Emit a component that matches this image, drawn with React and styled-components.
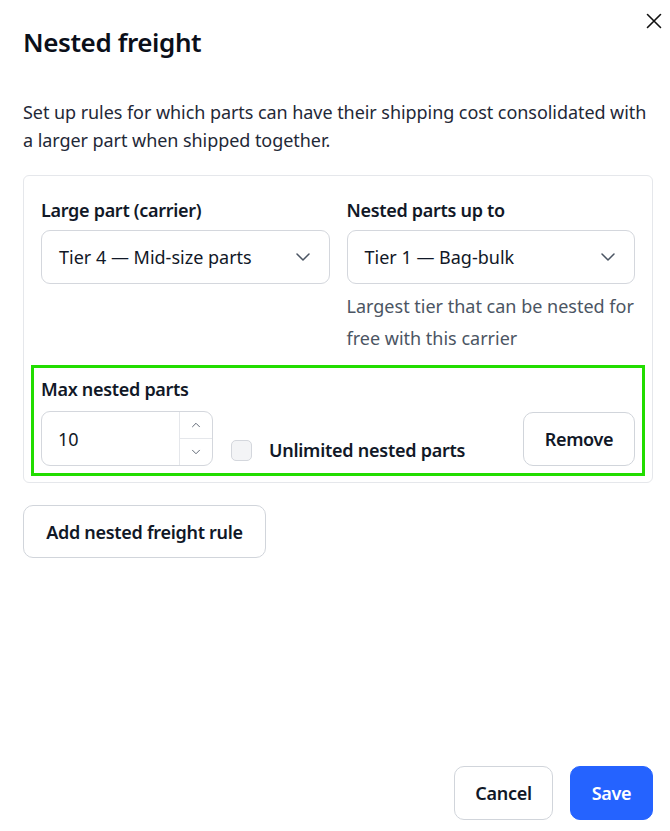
import React from "react";
import styled, { createGlobalStyle } from "styled-components";

const Global = createGlobalStyle`
  html, body { margin: 0; padding: 0; background: #ffffff; }
  body { font-family: "Noto Sans", "Liberation Sans", sans-serif; color: #111827; }
  * { box-sizing: border-box; }
`;

const Dialog = styled.div`
  position: relative;
  height: 831px;
  width: 670px;
  display: flex;
  flex-direction: column;
  padding: 24px 17px 11px 23px;
`;

const Close = styled.button`
  position: absolute;
  top: 9px;
  right: 4px;
  width: 24px;
  height: 24px;
  padding: 0;
  border: none;
  background: transparent;
  display: flex;
  align-items: center;
  justify-content: center;
  color: #111111;
`;

const Title = styled.h2`
  margin: 0;
  font-size: 26px;
  line-height: 36px;
  font-weight: 600;
  letter-spacing: -0.4px;
  color: #0b0f19;
`;

const Description = styled.p`
  margin: 38px 0 21px;
  font-size: 18px;
  line-height: 28px;
  letter-spacing: -0.06px;
  color: #1f2937;
`;

const Card = styled.div`
  border: 1px solid #e5e7eb;
  border-radius: 6px;
  padding: 20px 17px 16px;
  display: flex;
  flex-direction: column;
  gap: 21px;
`;

const Grid = styled.div`
  display: grid;
  grid-template-columns: 1fr 1fr;
  column-gap: 17px;
`;

const Field = styled.div`
  display: flex;
  flex-direction: column;
`;

const Label = styled.label`
  font-size: 18px;
  line-height: 28px;
  font-weight: 600;
  letter-spacing: -0.3px;
  color: #111827;
  margin-bottom: ${(p) => p.$gap || 6}px;
`;

const Select = styled.div`
  height: 54px;
  border: 1px solid #d4d7dd;
  border-radius: 9px;
  display: flex;
  align-items: center;
  justify-content: space-between;
  padding: 0 14px 0 17px;
  font-size: 18px;
  color: #111827;
  background: #fff;
`;

const SelectIcon = styled.span`
  display: flex;
  color: #4b5563;
`;

const Help = styled.div`
  margin-top: 6px;
  font-size: 18px;
  line-height: 32px;
  color: #4b5563;
`;

const MaxRow = styled.div`
  outline: 3px solid #22dd00;
  outline-offset: 7px;
  display: flex;
  flex-direction: column;
`;

const Controls = styled.div`
  display: flex;
  align-items: flex-end;
`;

const NumberBox = styled.div`
  width: 172px;
  height: 55px;
  border: 1px solid #d4d7dd;
  border-radius: 9px;
  display: flex;
  overflow: hidden;
`;

const NumberValue = styled.div`
  flex: 1;
  display: flex;
  align-items: center;
  padding-left: 16px;
  font-size: 18px;
  color: #111827;
`;

const Spinner = styled.div`
  width: 33px;
  border-left: 1px solid #e5e7eb;
  display: flex;
  flex-direction: column;
`;

const SpinBtn = styled.div`
  flex: 1;
  display: flex;
  align-items: center;
  justify-content: center;
  color: #4b5563;
  & + & { border-top: 1px solid #e5e7eb; }
`;

const CheckGroup = styled.label`
  display: flex;
  align-items: center;
  gap: 17px;
  margin-left: 18px;
  padding-bottom: 2px;
  font-size: 18px;
  line-height: 28px;
  font-weight: 600;
  letter-spacing: -0.25px;
  color: #111827;
`;

const Check = styled.span`
  width: 21px;
  height: 21px;
  border: 1px solid #d4d7dd;
  border-radius: 5px;
  background: #f3f4f6;
`;

const Button = styled.button`
  height: ${(p) => p.$h || 54}px;
  width: ${(p) => p.$w}px;
  padding: 0;
  white-space: nowrap;
  border-radius: 10px;
  font-family: inherit;
  font-size: 18px;
  font-weight: 600;
  letter-spacing: -0.3px;
  border: 1px solid ${(p) => (p.$primary ? "#2563ff" : "#d1d5db")};
  background: ${(p) => (p.$primary ? "#2563ff" : "#ffffff")};
  color: ${(p) => (p.$primary ? "#ffffff" : "#111827")};
`;

const RemoveButton = styled(Button)`
  margin-left: auto;
  align-self: flex-end;
`;

const AddRow = styled.div`
  margin-top: 22px;
  display: flex;
`;

const Footer = styled.div`
  margin-top: auto;
  display: flex;
  justify-content: flex-end;
  gap: 17px;
`;

const Chevron = ({ size = 18, up }) => (
  <svg width={size} height={size} viewBox="0 0 24 24" fill="none" stroke="currentColor" strokeWidth="1.5" strokeLinecap="round" strokeLinejoin="round">
    {up ? <path d="M6 15l6-6 6 6" /> : <path d="M6 9l6 6 6-6" />}
  </svg>
);

export default function App() {
  return (
    <>
      <Global />
      <Dialog>
        <Close aria-label="Close">
          <svg width="16" height="16" viewBox="0 0 16 16" fill="none" stroke="currentColor" strokeWidth="1.6" strokeLinecap="round">
            <path d="M1.5 1.5l13 13M14.5 1.5l-13 13" />
          </svg>
        </Close>
        <Title>Nested freight</Title>
        <Description>
          Set up rules for which parts can have their shipping cost consolidated with a larger part when shipped together.
        </Description>
        <Card>
          <Grid>
            <Field>
              <Label>Large part (carrier)</Label>
              <Select>
                <span>Tier 4 — Mid-size parts</span>
                <SelectIcon><Chevron size={24} /></SelectIcon>
              </Select>
            </Field>
            <Field>
              <Label>Nested parts up to</Label>
              <Select>
                <span>Tier 1 — Bag-bulk</span>
                <SelectIcon><Chevron size={24} /></SelectIcon>
              </Select>
              <Help>Largest tier that can be nested for free with this carrier</Help>
            </Field>
          </Grid>
          <MaxRow>
            <Label $gap={8}>Max nested parts</Label>
            <Controls>
              <NumberBox>
                <NumberValue>10</NumberValue>
                <Spinner>
                  <SpinBtn><Chevron size={14} up /></SpinBtn>
                  <SpinBtn><Chevron size={14} /></SpinBtn>
                </Spinner>
              </NumberBox>
              <CheckGroup>
                <Check />
                Unlimited nested parts
              </CheckGroup>
              <RemoveButton $w={112}>Remove</RemoveButton>
            </Controls>
          </MaxRow>
        </Card>
        <AddRow>
          <Button $h={53} $w={243}>Add nested freight rule</Button>
        </AddRow>
        <Footer>
          <Button $w={99}>Cancel</Button>
          <Button $primary $w={83}>Save</Button>
        </Footer>
      </Dialog>
    </>
  );
}
